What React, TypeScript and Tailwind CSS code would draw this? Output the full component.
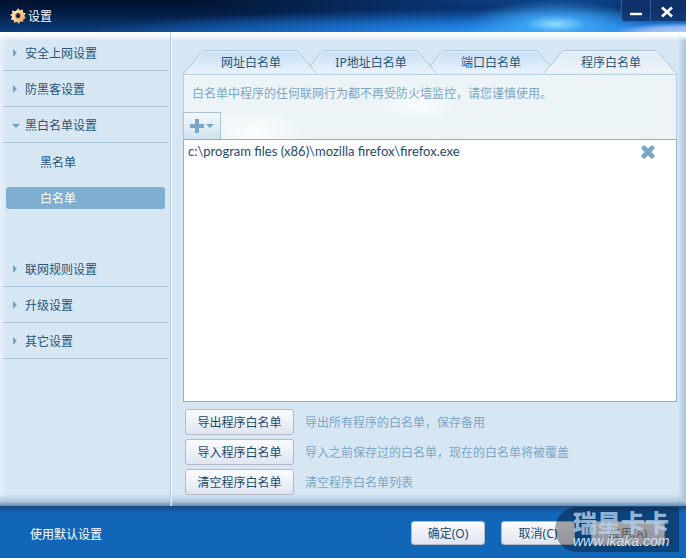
import React, { useState } from 'react'
import { clsx } from 'clsx'

const GROUPS = [
  { name: '安全上网设置' },
  { name: '防黑客设置' },
  { name: '黑白名单设置', children: ['黑名单', '白名单'] },
  { name: '联网规则设置' },
  { name: '升级设置' },
  { name: '其它设置' },
]

const TABS = ['网址白名单', 'IP地址白名单', '端口白名单', '程序白名单']

const ACTIONS = [
  { label: '导出程序白名单', hint: '导出所有程序的白名单，保存备用' },
  { label: '导入程序白名单', hint: '导入之前保存过的白名单，现在的白名单将被覆盖' },
  { label: '清空程序白名单', hint: '清空程序白名单列表' },
]

const GearIcon = () => (
  <svg viewBox="0 0 16 16" className="h-4 w-4">
    <defs>
      <linearGradient id="gear" x1="0" y1="0" x2="1" y2="1">
        <stop offset="0" stopColor="#fff3dc" />
        <stop offset="0.5" stopColor="#fbd096" />
        <stop offset="1" stopColor="#ee9a48" />
      </linearGradient>
    </defs>
    <path
      fill="url(#gear)"
      fillRule="evenodd"
      d="M6.400 2.400 8.400.2 9.800 2.500 12.900 1.500 13 4.400 15.900 5.200 14.300 7.800 15.900 10 13.400 11.200 13.200 13.800 10.400 13.400 8.800 16 7 13.800 4 14.700 3.800 12.200.8 11.400 2.200 8.800.1 6.800 2.500 5.400 1.800 2.400 4.800 3.200ZM8 5.800a2.200 2.200 0 1 0 0 4.400a2.200 2.200 0 1 0 0-4.400Z"
    />
    <circle cx="8" cy="8" r="2.500" fill="none" stroke="#c98546" strokeWidth="0.800" />
    <path d="M5.500 6.400Q8 3.800 10.600 6.400" fill="none" stroke="#6b4526" strokeWidth="1" />
  </svg>
)

const Header = () => (
  <header className="relative flex h-8 items-center overflow-hidden bg-linear-to-b from-[#02122d] via-[#05204c] to-[#0b417f] pl-2.5 text-white">
    <div className="absolute inset-0 bg-[radial-gradient(ellipse_55%_80%_at_82%_0%,#0d4591_0%,transparent_100%)]" />
    <div className="absolute inset-0 bg-[radial-gradient(ellipse_65%_75%_at_78%_100%,#2b9bf5_0%,#1d7be0cc_45%,transparent_100%)]" />
    <div className="absolute inset-0 bg-[radial-gradient(ellipse_13%_75%_at_81%_75%,#8fdcff_0%,#3fa9f8cc_35%,transparent_100%)]" />
    <div className="absolute inset-0 bg-[radial-gradient(ellipse_11%_35%_at_100%_105%,#b9d2fa_0%,#8db8f5_60%,transparent_100%)]" />
    <div className="relative flex items-center gap-0.5">
      <GearIcon />
      <h1 className="pt-0.5">设置</h1>
    </div>
    <div className="absolute top-0 right-0 flex h-[22px] rounded-bl border-b border-l border-[#3a5f93] bg-[#0f3168cc]">
      <button aria-label="最小化" className="flex w-7 items-center justify-center pt-0.5">
        <svg viewBox="0 0 12 12" className="h-3 w-3"><path d="M0 8h12" stroke="#fff" strokeWidth="2.400" /></svg>
      </button>
      <button aria-label="关闭" className="flex w-9 items-center justify-center border-l border-[#3a5f93] pt-0.5 pr-1">
        <svg viewBox="0 0 12 12" className="h-3 w-3"><path d="M1 1.500 11 10.500M11 1.500 1 10.500" stroke="#fff" strokeWidth="2.600" /></svg>
      </button>
    </div>
  </header>
)

const Sidebar = () => {
  const [open, setOpen] = useState('黑白名单设置')
  const [current, setCurrent] = useState('白名单')

  return (
    <nav className="w-[171px] shrink-0 border-r border-[#b4cbdf] pt-[3px]">
      {GROUPS.map((group) => {
        const expanded = open === group.name
        return (
          <div key={group.name}>
            <button
              onClick={() => setOpen(group.name)}
              className="ml-[3px] flex h-9 w-[165px] items-center border-b border-[#abc6da] pl-[9px] text-left"
            >
              <svg viewBox="0 0 8 8" className="mr-[5px] h-2 w-2 fill-[#6fa3c6]">
                <path d={expanded ? 'M0 3h8L4 7Z' : 'M1 0v8l4-4Z'} />
              </svg>
              <span className="pt-0.5">{group.name}</span>
            </button>
            {expanded && group.children && (
              <div className="h-27 pr-[5px] pl-1.5">
                {group.children.map((child) => (
                  <div key={child} className="flex h-9 items-center">
                    <button
                      onClick={() => setCurrent(child)}
                      className={clsx(
                        'mt-0.5 h-[22px] w-full rounded-[3px] pt-0.5 pl-[34px] text-left',
                        current === child && 'bg-[#7eaed0] text-white'
                      )}
                    >
                      {child}
                    </button>
                  </div>
                ))}
              </div>
            )}
          </div>
        )
      })}
    </nav>
  )
}

const Tabs = ({ active, onChange }: { active: string; onChange: (tab: string) => void }) => (
  <div role="tablist" className="flex pr-3.5">
    {TABS.map((tab, i) => (
      <button
        key={tab}
        role="tab"
        aria-selected={active === tab}
        onClick={() => onChange(tab)}
        className={clsx('relative h-6 flex-1 pt-0.5 pl-4', active === tab ? 'z-10' : i === 0 ? 'z-3' : i === 1 ? 'z-2' : 'z-1')}
      >
        <svg viewBox="0 0 134 24" preserveAspectRatio="none" className="absolute top-0 left-0 h-6 w-[calc(100%+14px)]">
          <defs>
            <linearGradient id={`tab${i}`} x1="0" y1="0" x2="0" y2="1">
              <stop offset="0" stopColor={active === tab ? '#dfeaf5' : '#c6def5'} />
              <stop offset="1" stopColor={active === tab ? '#edf4f9' : '#e9f2fa'} />
            </linearGradient>
          </defs>
          <path d="M.5 23.500 20.500.5h93l20 23" fill={`url(#tab${i})`} stroke="#adc6da" />
          <path d="M3 23.500 21 1.500h92l18 22" fill="none" stroke="#fff" strokeOpacity="0.6" />
        </svg>
        <span className="relative">{tab}</span>
      </button>
    ))}
  </div>
)

interface SilverButtonProps {
  className?: string
  disabled?: boolean
  children: React.ReactNode
}

const SilverButton = ({ className, disabled, children }: SilverButtonProps) => (
  <button
    disabled={disabled}
    className={clsx(
      'rounded-[3px] border border-[#b3bac6] bg-linear-to-b from-[#fbfcfe] to-[#dfe5f1] pt-0.5 text-center leading-4',
      disabled ? 'text-[#8f8f8f]' : 'text-[#1d4a6e]',
      className
    )}
  >
    {children}
  </button>
)

const Watermark = () => (
  <div className="pointer-events-none absolute top-px right-[7px] h-[45px] w-[124px] rounded-l-full bg-black/35 pl-[18px] whitespace-nowrap">
    <div className="mt-1.5 text-2xl leading-5 font-black text-[#b4d2f0]/80">瑞星卡卡</div>
    <div className="font-['Liberation_Sans'] text-sm leading-4 text-[#d3e1f0] italic">www.ikaka.com</div>
  </div>
)

export default function App() {
  const [tab, setTab] = useState('程序白名单')
  const [programs, setPrograms] = useState(['c:\\program files (x86)\\mozilla firefox\\firefox.exe'])

  return (
    <div className="flex min-h-screen flex-col bg-[#d7e6f3] font-['Noto_Sans','Noto_Sans_CJK_SC',sans-serif] text-xs text-[#285578]">
      <Header />
      <div className="flex flex-1 bg-[linear-gradient(to_bottom,#fff_0,#f4f9fd_4px,#d7e6f300_9px),linear-gradient(to_top,#6c8cae_0,#b4c9df_5px,#d7e6f300_12px),linear-gradient(to_right,#e6f0f8_0,#d7e6f300_8px),linear-gradient(to_left,#a9c1da_0,#d7e6f300_8px)]">
        <Sidebar />
        <main className="flex flex-1 flex-col border-l border-white/70 pt-[18px] pr-[9px] pb-[11px] pl-[11px]">
          <Tabs active={tab} onChange={setTab} />
          <section className="flex flex-1 flex-col border border-[#b7cfe0] bg-[#ecf4f8] bg-[radial-gradient(ellipse_40px_18px_at_235px_28px,#fffc_0%,transparent_100%),radial-gradient(ellipse_50px_22px_at_70px_56px,#fffc_0%,transparent_100%)]">
            <p className="px-2 pt-[11px] pb-2.5 leading-4 text-[#7ba6c6]">白名单中程序的任何联网行为都不再受防火墙监控，请您谨慎使用。</p>
            <div className="-ml-px">
              <button aria-label="添加" className="flex h-[27px] w-[38px] items-center justify-center gap-0.5 border border-b-0 border-[#a9c4d8] bg-linear-to-b from-[#f5f9fc] to-[#cfe1ef]">
                <svg viewBox="0 0 14 14" className="h-3.5 w-3.5"><path d="M7 0v14M0 7h14" stroke="#7ba6c6" strokeWidth="4" /></svg>
                <svg viewBox="0 0 8 8" className="h-2 w-2 fill-[#7ba6c6]"><path d="M0 2h8L4 6Z" /></svg>
              </button>
            </div>
            <ul className="-mx-px -mb-px min-h-40 flex-1 border border-[#8fb2cc] bg-white">
              {programs.map((program) => (
                <li key={program} className="flex h-6 items-center justify-between pr-[21px] pl-1 font-['Lato','Noto_Sans_CJK_SC',sans-serif] text-[13px] text-[#1d4a6e]">
                  {program}
                  <button aria-label="删除" onClick={() => setPrograms(programs.filter((p) => p !== program))}>
                    <svg viewBox="0 0 14 14" className="h-3.5 w-3.5"><path d="M3 3 11 11M11 3 3 11" stroke="#7ba6c6" strokeWidth="4.800" strokeLinecap="round" /></svg>
                  </button>
                </li>
              ))}
            </ul>
          </section>
          <div className="mt-[7px] flex flex-col gap-1 pl-0.5">
            {ACTIONS.map((action) => (
              <div key={action.label} className="flex items-center gap-[11px]">
                <SilverButton className="h-[26px] w-[109px]">{action.label}</SilverButton>
                <span className="pt-0.5 text-[#7ba6c6]">{action.hint}</span>
              </div>
            ))}
          </div>
        </main>
      </div>
      <footer className="relative flex h-[52px] items-center bg-[#1266b8] bg-[linear-gradient(to_bottom,#1b4a82_0,#1266b800_7px)] pt-0.5 pr-[21px] pl-[30px]">
        <button className="mr-auto pt-1 text-white">使用默认设置</button>
        <div className="flex gap-4">
          <SilverButton className="h-6 w-[74px]">确定(O)</SilverButton>
          <SilverButton className="h-6 w-[74px]">取消(C)</SilverButton>
          <SilverButton className="h-6 w-[74px]" disabled>应用(A)</SilverButton>
        </div>
        <Watermark />
      </footer>
    </div>
  )
}
